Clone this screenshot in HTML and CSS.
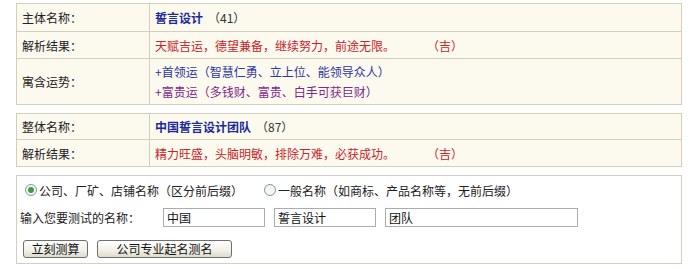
FILE: index.html
```html
<!DOCTYPE html>
<html lang="zh-CN">
<head>
<meta charset="utf-8">
<title>名称测试结果</title>
<link rel="stylesheet" href="styles.css">
</head>
<body>
<div class="page">
  <div class="tbl">
    <div class="cell lbl r1">主体名称：</div>
    <div class="cell val r1"><b class="name">誓言设计</b><span class="num">（41）</span></div>
    <div class="cell lbl r2">解析结果：</div>
    <div class="cell val r2 red">天赋吉运，德望兼备，继续努力，前途无限。<span class="ji">（吉）</span></div>
    <div class="cell lbl r3 last">寓含运势：</div>
    <div class="cell val r3 last multi">
      <div class="blue">+首领运（智慧仁勇、立上位、能领导众人）</div>
      <div class="purple">+富贵运（多钱财、富贵、白手可获巨财）</div>
    </div>
  </div>

  <div class="tbl gap">
    <div class="cell lbl t2r1">整体名称：</div>
    <div class="cell val t2r1"><b class="name">中国誓言设计团队</b><span class="num">（87）</span></div>
    <div class="cell lbl t2r2 last">解析结果：</div>
    <div class="cell val t2r2 last red">精力旺盛，头脑明敏，排除万难，必获成功。<span class="ji">（吉）</span></div>
  </div>

  <div class="form gap">
    <div class="radios">
      <label class="opt"><span class="radio on"></span>公司、厂矿、店铺名称（区分前后缀）</label>
      <label class="opt second"><span class="radio"></span>一般名称（如商标、产品名称等，无前后缀）</label>
    </div>
    <div class="inputs">
      <span class="prompt">输入您要测试的名称：</span>
      <input class="box short" type="text" value="中国">
      <input class="box short" type="text" value="誓言设计">
      <input class="box long" type="text" value="团队">
    </div>
    <div class="buttons">
      <button class="btn b1" type="button">立刻测算</button>
      <button class="btn b2" type="button">公司专业起名测名</button>
    </div>
  </div>
</div>
</body>
</html>
```

FILE: styles.css
```css
html, body {
  margin: 0;
  padding: 0;
  background: #ffffff;
}
body {
  font-family: "Noto Sans CJK SC", "Noto Sans", sans-serif;
  font-size: 12px;
  color: #222222;
}
.page {
  padding: 3px 0 0 16px;
  width: 666px;
}
.tbl {
  display: grid;
  grid-template-columns: 133px 1fr;
  border: 1px solid #d3cfb8;
  background: #fcf9ee;
}
.gap {
  margin-top: 8px;
}
.cell {
  display: flex;
  align-items: center;
  padding-left: 5px;
  border-bottom: 1px solid #d3cfb8;
  white-space: nowrap;
}
.cell.last {
  border-bottom: none;
}
.lbl {
  border-right: 1px solid #d3cfb8;
  color: #222222;
}
.r1 { height: 27px; }
.r2 { height: 26px; }
.r3 { height: 45px; }
.t2r1 { height: 25px; }
.t2r2 { height: 26px; }
.name {
  color: #1b2b9c;
  font-weight: bold;
}
.num {
  margin-left: 5px;
  color: #333333;
}
.red {
  color: #c8252a;
}
.ji {
  margin-left: 32px;
}
.multi {
  flex-direction: column;
  align-items: flex-start;
  justify-content: center;
}
.multi div {
  line-height: 20px;
}
.blue { color: #2d35a0; }
.purple { color: #7d2a8c; }

.form {
  border: 1px solid #d3cfb8;
  background: #ffffff;
  padding: 4px 0 5px 0;
  color: #222222;
}
.radios {
  display: flex;
  align-items: center;
  height: 20px;
  padding-left: 8px;
}
.opt {
  display: flex;
  align-items: center;
  white-space: nowrap;
}
.opt.second {
  margin-left: 21px;
}
.radio {
  width: 10px;
  height: 10px;
  border: 1px solid #7f9a98;
  border-radius: 50%;
  background: #f4f6f2;
  margin-right: 2px;
  position: relative;
  flex: none;
}
.radio.on::after {
  content: "";
  position: absolute;
  left: 2px;
  top: 2px;
  width: 6px;
  height: 6px;
  border-radius: 50%;
  background: #3f9a49;
}
.inputs {
  display: flex;
  align-items: center;
  margin-top: 8px;
  height: 19px;
  padding-left: 3px;
}
.prompt {
  width: 143px;
  flex: none;
}
.box {
  box-sizing: border-box;
  height: 19px;
  border: 1px solid #a6adb8;
  padding: 0 3px;
  margin: 0 9px 0 0;
  font-family: "Noto Sans CJK SC", "Noto Sans", sans-serif;
  font-size: 12px;
  color: #111111;
  background: #ffffff;
  outline: none;
}
.short { width: 102px; }
.long { width: 193px; }
.buttons {
  display: flex;
  margin-top: 13px;
  padding-left: 6px;
}
.btn {
  box-sizing: border-box;
  height: 18px;
  padding: 0;
  margin: 0 9px 0 0;
  border: 1px solid #6f6f6f;
  border-radius: 3px;
  background: linear-gradient(#ffffff, #f1efe6 60%, #dedbcf);
  font-family: "Noto Sans CJK SC", "Noto Sans", sans-serif;
  font-size: 12px;
  line-height: 16px;
  color: #111111;
}
.b1 { width: 65px; }
.b2 { width: 135px; }
```
